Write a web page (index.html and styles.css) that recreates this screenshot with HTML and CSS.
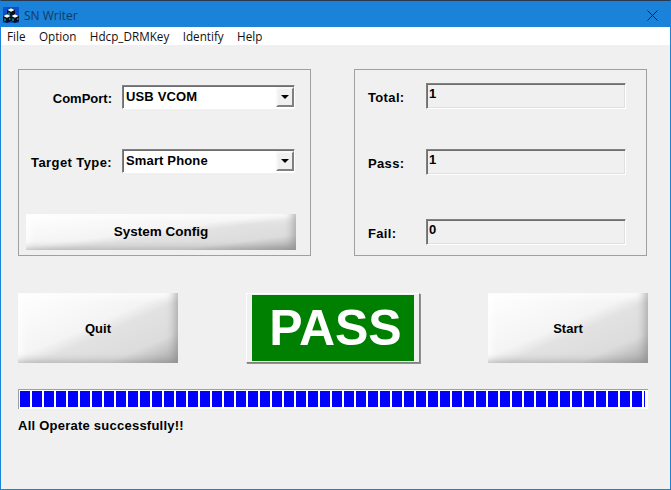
FILE: index.html
```html
<!DOCTYPE html>
<html lang="en">
<head>
<meta charset="utf-8">
<title>SN Writer</title>
<link rel="stylesheet" href="styles.css">
</head>
<body>
<div class="window">
  <header class="titlebar">
    <svg class="app-icon" width="16" height="16" viewBox="0 0 16 16">
      <rect width="16" height="16" fill="#0a4fd0"/>
      <path d="M4 3L8 1L12 3V8L8 10L4 8Z" fill="#06101e"/>
      <path d="M0 9L4 7L8 9L12 7L16 9V14L12 16L8 14L4 16L0 14Z" fill="#06101e"/>
      <path d="M4.500 3L8 1.200L11.500 3L8 4.800Z" fill="#fff"/>
      <path d="M.5 9L4 7.200L7.500 9L4 10.800Z" fill="#fff"/>
      <path d="M8.500 9L12 7.200L15.500 9L12 10.800Z" fill="#fff"/>
      <path d="M2 11.500V14M6 12H7.500M10 11.500V14M14 12H15.500M6 5.500V8" stroke="#00e0e0" fill="none"/>
    </svg>
    <span class="title-text">SN Writer</span>
    <svg class="close-icon" width="11" height="11" viewBox="0 0 11 11">
      <path d="M.5 .5L10.500 10.500M10.500 .5L.5 10.500" stroke="#10202c" fill="none"/>
    </svg>
  </header>
  <nav class="menubar">
    <span>File</span><span>Option</span><span>Hdcp_DRMKey</span><span>Identify</span><span>Help</span>
  </nav>
  <main class="content">
    <div class="panels">
      <section class="group group-config">
        <div class="field-row row-port">
          <label class="label">ComPort:</label>
          <div class="combo"><span class="combo-text">USB VCOM</span><span class="combo-btn"><i class="arrow"></i></span></div>
        </div>
        <div class="field-row row-type">
          <label class="label label-wide">Target Type:</label>
          <div class="combo"><span class="combo-text">Smart Phone</span><span class="combo-btn"><i class="arrow"></i></span></div>
        </div>
        <div class="bevel sys-config">System Config</div>
      </section>
      <section class="group group-stats">
        <div class="stat-row"><label class="label">Total:</label><div class="readout">1</div></div>
        <div class="stat-row"><label class="label">Pass:</label><div class="readout">1</div></div>
        <div class="stat-row stat-fail"><label class="label">Fail:</label><div class="readout">0</div></div>
      </section>
    </div>
    <div class="actions">
      <div class="bevel action">Quit</div>
      <div class="result">PASS</div>
      <div class="bevel action">Start</div>
    </div>
    <div class="progress"><div class="progress-fill"></div></div>
    <p class="status">All Operate successfully!!</p>
  </main>
</div>
</body>
</html>
```
FILE: styles.css
```css
* { box-sizing: border-box; }
html, body { margin: 0; padding: 0; }
body { background: #f0f0f0; font-family: "Liberation Sans", Arial, sans-serif; }

.window {
  width: 671px;
  height: 490px;
  display: flex;
  flex-direction: column;
  background: #f0f0f0;
  border: 1px solid #1a82d9;
  border-top: 1px solid #2a3a4c;
  overflow: hidden;
}

.titlebar {
  height: 26px;
  flex: none;
  margin: 0 -1px;
  padding: 0 9px 0 3px;
  display: flex;
  align-items: center;
  background: #1a82d9;
}
.app-icon { flex: none; margin-top: 2px; }
.title-text {
  margin-left: 5px;
  margin-top: 2px;
  font: 12px "Open Sans", sans-serif;
  color: #123a5e;
}
.close-icon { margin-left: auto; margin-top: 2px; margin-right: 4px; }

.menubar {
  height: 18px;
  flex: none;
  display: flex;
  align-items: center;
  gap: 13.4px;
  padding-left: 6px;
  background: #fff;
  font: 11.7px "Open Sans", sans-serif;
  color: #111;
}

.content {
  flex: 1;
  padding: 24px 0 0 17px;
}

.panels { display: flex; gap: 43px; }

.group {
  width: 293px;
  height: 187px;
  border: 1px solid #a0a0a0;
}

.label { font-size: 13px; font-weight: 700; color: #000; }
.label-wide { letter-spacing: .4px; }

.field-row { display: flex; align-items: center; gap: 10px; }
.field-row .label { width: 93px; flex: none; white-space: nowrap; text-align: right; margin-top: 2px; }
.row-port { margin-top: 15px; }
.row-type { margin-top: 40px; }

.combo {
  width: 173px;
  height: 24px;
  display: flex;
  background: #fff;
  border: 1px solid;
  border-color: #808080 #fff #fff #808080;
  box-shadow: inset 1px 1px 0 #6e6e6e;
}
.combo-text {
  flex: 1;
  padding: 1px 3px 0;
  font-size: 13px;
  font-weight: 700;
  line-height: 20px;
  letter-spacing: .15px;
  color: #000;
}
.combo-btn {
  width: 18px;
  height: 20px;
  margin: 1px 0 0;
  display: flex;
  align-items: center;
  justify-content: center;
  background: #f0f0f0;
  border: 2px solid;
  border-color: #f8f8f8 #808080 #808080 #f8f8f8;
}
.arrow {
  width: 0;
  height: 0;
  border: 4px solid transparent;
  border-top-color: #000;
  border-bottom: 0;
}

.bevel {
  display: flex;
  align-items: center;
  justify-content: center;
  font-weight: 700;
  font-size: 13px;
  color: #000;
  background: linear-gradient(to bottom right, #fff 0%, #f4f4f4 46%, #e2e2e2 56%, #dcdcdc 78%, #a4a4a4 100%);
  box-shadow: inset -6px -4px 9px -3px rgba(130,130,130,.6), inset 5px 5px 9px -2px rgba(255,255,255,.9);
}
.sys-config {
  width: 270px;
  height: 36px;
  margin: 41px 0 0 7px;
  font-size: 13.5px;
  padding-bottom: 2px;
}

.group-stats { padding-top: 13px; }
.stat-row { display: flex; align-items: center; }
.stat-row .label { width: 71px; padding-left: 13px; margin-top: 2px; letter-spacing: .35px; }
.stat-row + .stat-row { margin-top: 40px; }
.stat-row.stat-fail { margin-top: 44px; }
.readout {
  width: 200px;
  height: 26px;
  padding: 1px 2px;
  font-size: 13px;
  font-weight: 700;
  line-height: 17px;
  background: #f0f0f0;
  border: 1px solid;
  border-color: #808080 #fff #fff #808080;
  box-shadow: inset 1px 1px 0 #6e6e6e, inset -1px -1px 0 #e0e0e0;
}

.actions {
  width: 630px;
  margin-top: 37px;
  display: flex;
  justify-content: space-between;
}
.action { width: 160px; height: 70px; }
.result {
  width: 174px;
  height: 70px;
  padding-left: 5px;
  display: flex;
  align-items: center;
  justify-content: center;
  background: #008000;
  color: #fff;
  font-size: 50px;
  font-weight: 700;
  line-height: 1;
  border: 1px solid;
  border-color: #fff #808080 #808080 #fff;
  box-shadow: inset 5px 1px 0 #f0f0f0, inset -5px -1px 0 #f0f0f0, 1px 1px 0 #909090;
}

.progress {
  width: 630px;
  height: 20px;
  margin-top: 26px;
  padding: 1px 3px 2px 1px;
  background: #fff;
  border-top: 1px solid #a0a0a0;
  border-left: 1px solid #a0a0a0;
}
.progress-fill {
  height: 100%;
  background: repeating-linear-gradient(90deg, #0000ff 0 10px, #fff 10px 12px);
}

.status {
  margin: 8px 0 0;
  padding-top: 1px;
  font-size: 13px;
  font-weight: 700;
  letter-spacing: .24px;
  color: #000;
}
```
